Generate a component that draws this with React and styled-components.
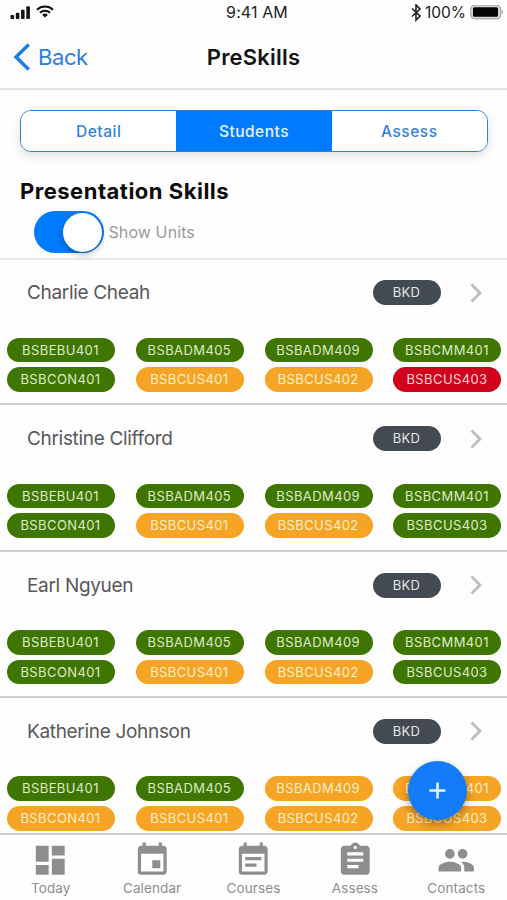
import React, { useState } from "react";
import styled, { createGlobalStyle } from "styled-components";
import { MdDashboard, MdEvent, MdEventNote, MdAssignment, MdPeople } from "react-icons/md";

const GlobalStyle = createGlobalStyle`
    * { box-sizing: border-box; }
    body {
        margin: 0;
        background: #fff;
        font-family: Inter, Roboto, "Liberation Sans", sans-serif;
    }
    button {
        font-family: inherit;
        border: 0;
        padding: 0;
        background: none;
    }
`;

const Screen = styled.div`
    position: relative;
    display: flex;
    flex-direction: column;
    height: 900px;
    overflow: hidden;
    background: #fefefe;
`;

const StatusBar = styled.div`
    display: grid;
    grid-template-columns: 1fr auto 1fr;
    align-items: center;
    flex: none;
    height: 25px;
    padding: 0 3px 0 10px;
    color: #222;
    font-size: 15.5px;
    line-height: 25px;
`;

const StatusGroup = styled.div`
    display: flex;
    align-items: center;
    justify-content: ${(props) => (props.$end ? "flex-end" : "flex-start")};
    gap: ${(props) => (props.$end ? "4px" : "5px")};
    height: 22px;
`;

const Clock = styled.span`
    font-size: 16px;
    letter-spacing: 0.1px;
`;

const NavBar = styled.header`
    display: grid;
    grid-template-columns: 1fr auto 1fr;
    align-items: center;
    flex: none;
    height: 65px;
    padding: 0 13px;
    border-bottom: 2px solid #e3e3e4;
`;

const BackButton = styled.button`
    display: flex;
    align-items: center;
    gap: 8px;
    color: #2a7fe0;
    font-size: 22px;
    letter-spacing: -0.4px;
`;

const Title = styled.h1`
    margin: 0;
    color: #151515;
    font-size: 22px;
    font-weight: 600;
    letter-spacing: 0.2px;
`;

const Segments = styled.div`
    display: flex;
    flex: none;
    height: 42px;
    margin: 20px 19px 0 20px;
    overflow: hidden;
    border: 1.5px solid #2f80dc;
    border-radius: 11px;
    box-shadow: 0 4px 10px rgba(60, 60, 80, 0.16);
`;

const Segment = styled.button`
    flex: 1;
    color: ${(props) => (props.$active ? "#e9f4ff" : "#3182dc")};
    background: ${(props) => (props.$active ? "#007aff" : "#fff")};
    font-size: 15.5px;
    font-weight: 500;
    letter-spacing: 0.5px;
`;

const Heading = styled.h2`
    flex: none;
    height: 28px;
    margin: 25px 0 1px 20px;
    color: #0b0b0b;
    font-size: 22px;
    font-weight: 700;
    line-height: 28px;
    letter-spacing: 0.5px;
`;

const ToggleRow = styled.div`
    display: flex;
    align-items: center;
    flex: none;
    gap: 5px;
    height: 54px;
    padding: 0 0 0 33.5px;
    border-bottom: 2px solid #e9e9ea;
    color: #999;
    font-size: 16px;
    letter-spacing: 0.1px;
`;

const Switch = styled.button`
    display: flex;
    align-items: center;
    justify-content: ${(props) => (props.$on ? "flex-end" : "flex-start")};
    width: 70px;
    height: 42px;
    padding: 1.5px;
    border-radius: 21px;
    background: ${(props) => (props.$on ? "#007aff" : "#ccc")};
`;

const Knob = styled.span`
    width: 39px;
    height: 39px;
    border-radius: 50%;
    background: #fff;
    box-shadow: 0 3px 6px rgba(0, 0, 0, 0.25);
`;

const StudentList = styled.div`
    flex: 1;
    min-height: 0;
    margin-top: -1px;
    overflow: hidden;
`;

const StudentCard = styled.div`
    height: 146.3px;
    border-bottom: 2px solid #cfcfd0;
`;

const StudentHead = styled.div`
    display: flex;
    align-items: center;
    height: 67px;
    padding: 0 24.5px 0 27px;
`;

const StudentName = styled.span`
    flex: 1;
    color: #58585a;
    font-size: 19px;
    letter-spacing: -0.32px;
`;

const Badge = styled.span`
    width: 68px;
    height: 25px;
    margin-right: 28px;
    border-radius: 13px;
    background: #444a51;
    color: #e3e5e7;
    font-size: 13px;
    line-height: 25px;
    text-align: center;
    letter-spacing: 0.3px;
`;

const Units = styled.div`
    display: grid;
    grid-template-columns: repeat(4, 108px);
    justify-content: space-between;
    row-gap: 5px;
    padding: 11.5px 5.5px 0 7px;
`;

const unitColors = {
    green: { back: "#3f7602", text: "#dcebc8" },
    amber: { back: "#f5a425", text: "#fff0c8" },
    red: { back: "#d0021b", text: "#ffd5d5" },
};

const Unit = styled.span`
    height: 24.6px;
    padding-right: 1px;
    border-radius: 13px;
    background: ${(props) => unitColors[props.$color].back};
    color: ${(props) => unitColors[props.$color].text};
    font-size: 13px;
    line-height: 25px;
    text-align: center;
    letter-spacing: 0.4px;
`;

const AddButton = styled.button`
    position: absolute;
    right: 40px;
    bottom: 80.5px;
    display: flex;
    align-items: center;
    justify-content: center;
    width: 59px;
    height: 59px;
    border-radius: 50%;
    background: #147cfa;
    box-shadow: 0 4px 8px rgba(0, 0, 0, 0.35);
`;

const TabBar = styled.nav`
    display: flex;
    flex: none;
    height: 67px;
    border-top: 2px solid #cdcdce;
    background: #fefefe;
`;

const Tab = styled.button`
    display: flex;
    flex: 1;
    flex-direction: column;
    align-items: center;
    padding-top: 6px;
    color: #8e8e90;
    font-size: 13.5px;
    line-height: 17px;
    letter-spacing: 0.1px;

    svg {
        display: block;
        flex: none;
        width: 38.5px;
        height: 38.5px;
    }
`;

const students = [
    { name: "Charlie Cheah", colors: ["green", "green", "green", "green", "green", "amber", "amber", "red"] },
    { name: "Christine Clifford", colors: ["green", "green", "green", "green", "green", "amber", "amber", "green"] },
    { name: "Earl Ngyuen", colors: ["green", "green", "green", "green", "green", "amber", "amber", "green"] },
    { name: "Katherine Johnson", colors: ["green", "green", "amber", "amber", "amber", "amber", "amber", "amber"] },
];

const units = [
    "BSBEBU401", "BSBADM405", "BSBADM409", "BSBCMM401",
    "BSBCON401", "BSBCUS401", "BSBCUS402", "BSBCUS403",
];

const tabs = [
    { label: "Today", Icon: MdDashboard },
    { label: "Calendar", Icon: MdEvent },
    { label: "Courses", Icon: MdEventNote },
    { label: "Assess", Icon: MdAssignment },
    { label: "Contacts", Icon: MdPeople },
];

const SignalIcon = () => (
    <svg width="21" height="14" viewBox="0 0 21 14" fill="#111">
        <rect x="0.5" y="9" width="3.6" height="4" rx="1" />
        <rect x="5.8" y="6.8" width="3.6" height="6.2" rx="1" />
        <rect x="11" y="3.7" width="3.6" height="9.3" rx="1" />
        <rect x="16.3" y="0.3" width="3.6" height="12.7" rx="1" />
    </svg>
);

const WifiIcon = () => (
    <svg width="18" height="15" viewBox="0 0 18 15" fill="none" stroke="#111" strokeWidth="2">
        <path d="M1 4.7a11.6 11.6 0 0 1 16 0" />
        <path d="M4 7.7a7.4 7.4 0 0 1 10 0" />
        <path d="M9 12.6 6.2 9.9a4 4 0 0 1 5.6 0z" fill="#111" stroke="none" />
    </svg>
);

const BluetoothIcon = () => (
    <svg width="10" height="18" viewBox="0 0 10 18" fill="none" stroke="#222" strokeWidth="1.6">
        <path d="M1 4.5l8 7.5-4 4V1l4 4-8 7.5" />
    </svg>
);

const BatteryIcon = () => (
    <svg width="34" height="15" viewBox="0 0 34 15">
        <rect x="0.7" y="0.2" width="30" height="13.6" rx="4" fill="#d4d4d4" stroke="#aaa" strokeWidth="1.2" />
        <rect x="3" y="2.2" width="25" height="9.6" rx="1.6" fill="#050505" />
        <path d="M31.8 4.4q2.4 2.6 0 5.2z" fill="#999" />
    </svg>
);

const App = () => {
    const [segment, setSegment] = useState("Students");
    const [showUnits, setShowUnits] = useState(true);

    return (
        <Screen>
            <GlobalStyle />
            <StatusBar>
                <StatusGroup>
                    <SignalIcon />
                    <WifiIcon />
                </StatusGroup>
                <Clock>9:41 AM</Clock>
                <StatusGroup $end>
                    <BluetoothIcon />
                    100%
                    <BatteryIcon />
                </StatusGroup>
            </StatusBar>

            <NavBar>
                <BackButton>
                    <svg width="17" height="28" viewBox="0 0 17 28" fill="none" stroke="#187ced" strokeWidth="3.4">
                        <path d="M15.8 1.5 3 14l12.8 12.5" />
                    </svg>
                    Back
                </BackButton>
                <Title>PreSkills</Title>
            </NavBar>

            <Segments>
                {["Detail", "Students", "Assess"].map((label) => (
                    <Segment key={label} $active={segment === label} onClick={() => setSegment(label)}>
                        {label}
                    </Segment>
                ))}
            </Segments>

            <Heading>Presentation Skills</Heading>
            <ToggleRow>
                <Switch $on={showUnits} onClick={() => setShowUnits(!showUnits)}>
                    <Knob />
                </Switch>
                Show Units
            </ToggleRow>

            <StudentList>
                {students.map((student) => (
                    <StudentCard key={student.name}>
                        <StudentHead>
                            <StudentName>{student.name}</StudentName>
                            <Badge>BKD</Badge>
                            <svg width="14" height="20" viewBox="0 0 14 20" fill="none" stroke="#bdbdc0" strokeWidth="2.8">
                                <path d="M2.5 1.5 11 10l-8.5 8.5" />
                            </svg>
                        </StudentHead>
                        {showUnits && (
                            <Units>
                                {units.map((unit, i) => (
                                    <Unit key={unit} $color={student.colors[i]}>{unit}</Unit>
                                ))}
                            </Units>
                        )}
                    </StudentCard>
                ))}
            </StudentList>

            <AddButton>
                <svg width="17" height="17" viewBox="0 0 17 17" stroke="#e8f3ff" strokeWidth="2.6">
                    <path d="M8.5 0.5v16M0.5 8.5h16" />
                </svg>
            </AddButton>

            <TabBar>
                {tabs.map(({ label, Icon }) => (
                    <Tab key={label}>
                        <Icon />
                        {label}
                    </Tab>
                ))}
            </TabBar>
        </Screen>
    );
};

export default App;
